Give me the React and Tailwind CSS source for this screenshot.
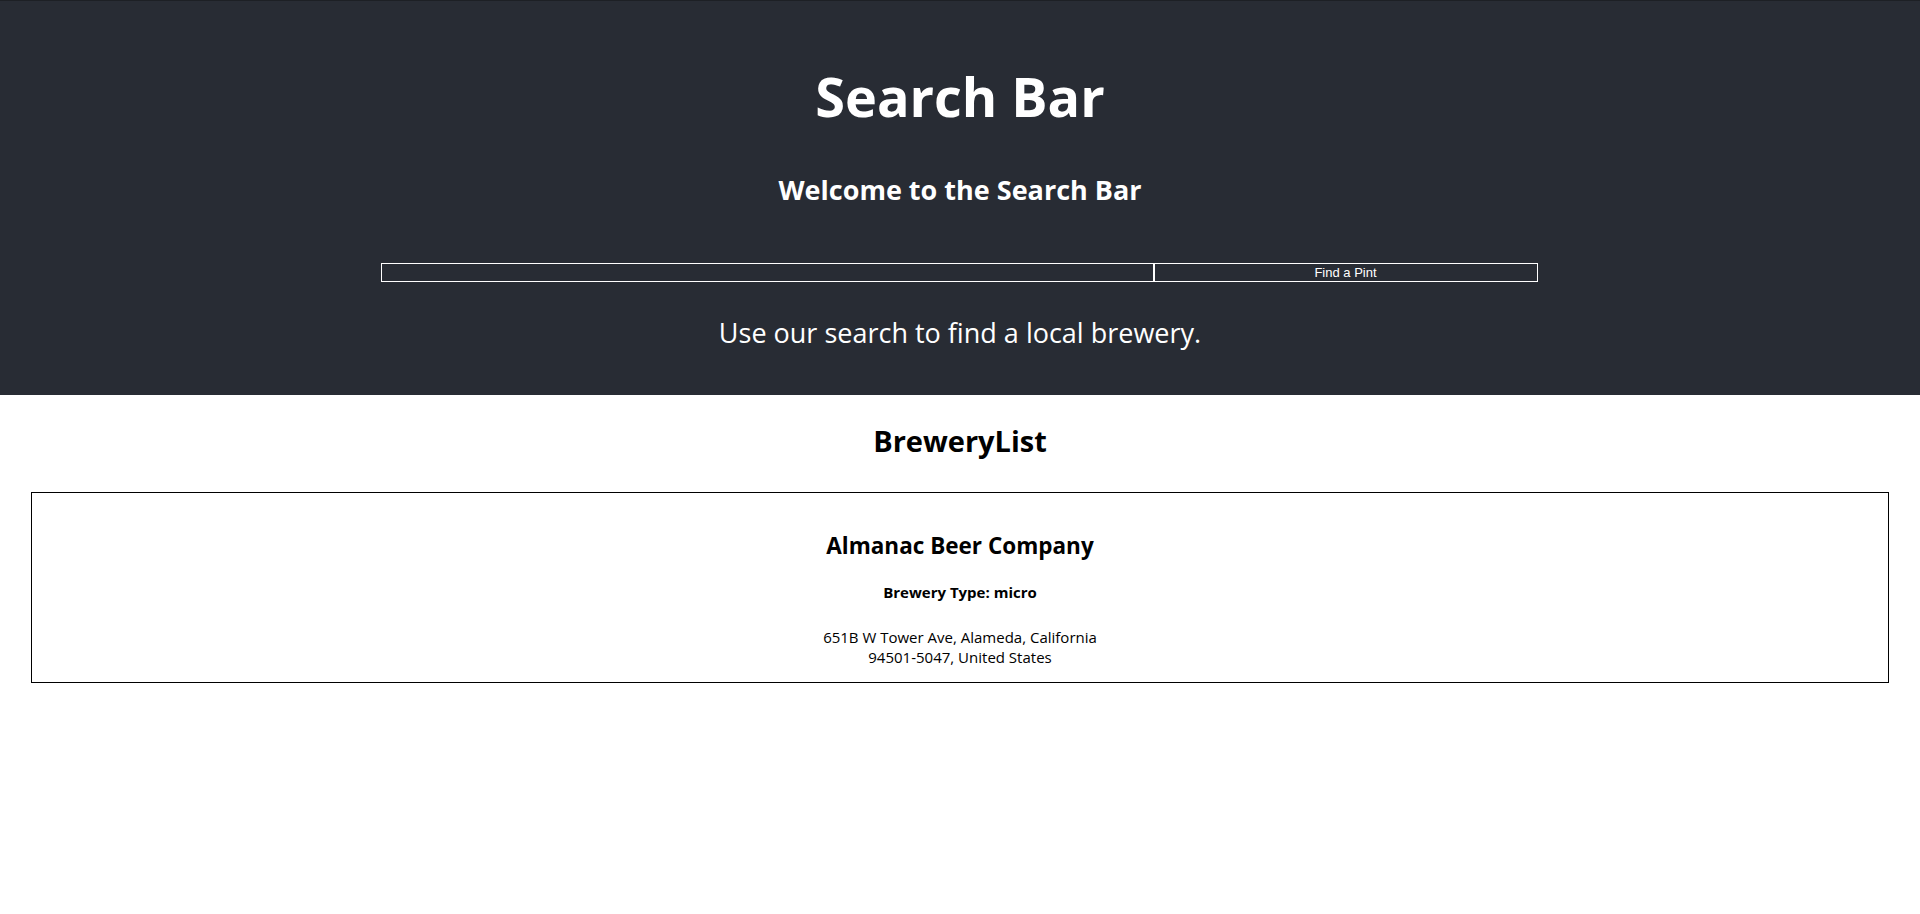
import React, { useState } from 'react';

const brewery = {
  name: 'Almanac Beer Company',
  type: 'micro',
  street: '651B W Tower Ave',
  city: 'Alameda',
  state: 'California',
  postal: '94501-5047',
  country: 'United States',
};

function SearchHeader({ query, setQuery }) {
  return (
    <header className="flex flex-col items-center bg-[#282c34] border-t border-[#1d2025] pt-[68px] pb-[49px] text-white">
      <h1 className="text-[54px] leading-[54px] font-bold">Search Bar</h1>
      <h2 className="mt-[53px] text-[27px] leading-[27px] font-bold">Welcome to the Search Bar</h2>

      {/* search form */}
      <form className="mt-[60px] flex w-[1157px] h-[19px] -translate-x-[1px]" onSubmit={(e) => e.preventDefault()}>
        <input
          value={query}
          onChange={(e) => setQuery(e.target.value)}
          className="w-[773px] h-full border border-white bg-transparent text-white outline-none"
        />
        <button
          type="submit"
          className="flex-1 h-full border border-white bg-transparent text-white text-[13px] leading-[17px] font-['Liberation_Sans',Arial,sans-serif]"
        >
          Find a Pint
        </button>
      </form>

      <p className="mt-[37px] text-[27px] leading-[27px]">Use our search to find a local brewery.</p>
    </header>
  );
}

function BreweryCard({ b }) {
  return (
    <div className="mx-[31px] mt-[37px] border border-black pt-[41px] pb-[15px] flex flex-col items-center text-black">
      <h3 className="text-[22.5px] leading-[23px] font-bold">{b.name}</h3>
      <h4 className="mt-[28px] text-[15px] leading-[15px] font-bold">Brewery Type: {b.type}</h4>
      <p className="mt-[27px] text-[15px] leading-[20px] text-center">
        {b.street}, {b.city}, {b.state}
        <br />
        {b.postal}, {b.country}
      </p>
    </div>
  );
}

export default function App() {
  const [query, setQuery] = useState('');
  return (
    <div className="min-h-screen bg-white font-['Open_Sans',sans-serif]">
      <SearchHeader query={query} setQuery={setQuery} />
      <section className="flex flex-col">
        <h2 className="mt-[31px] text-center text-[29px] leading-[29px] font-bold text-black">BreweryList</h2>
        <BreweryCard b={brewery} />
      </section>
    </div>
  );
}
